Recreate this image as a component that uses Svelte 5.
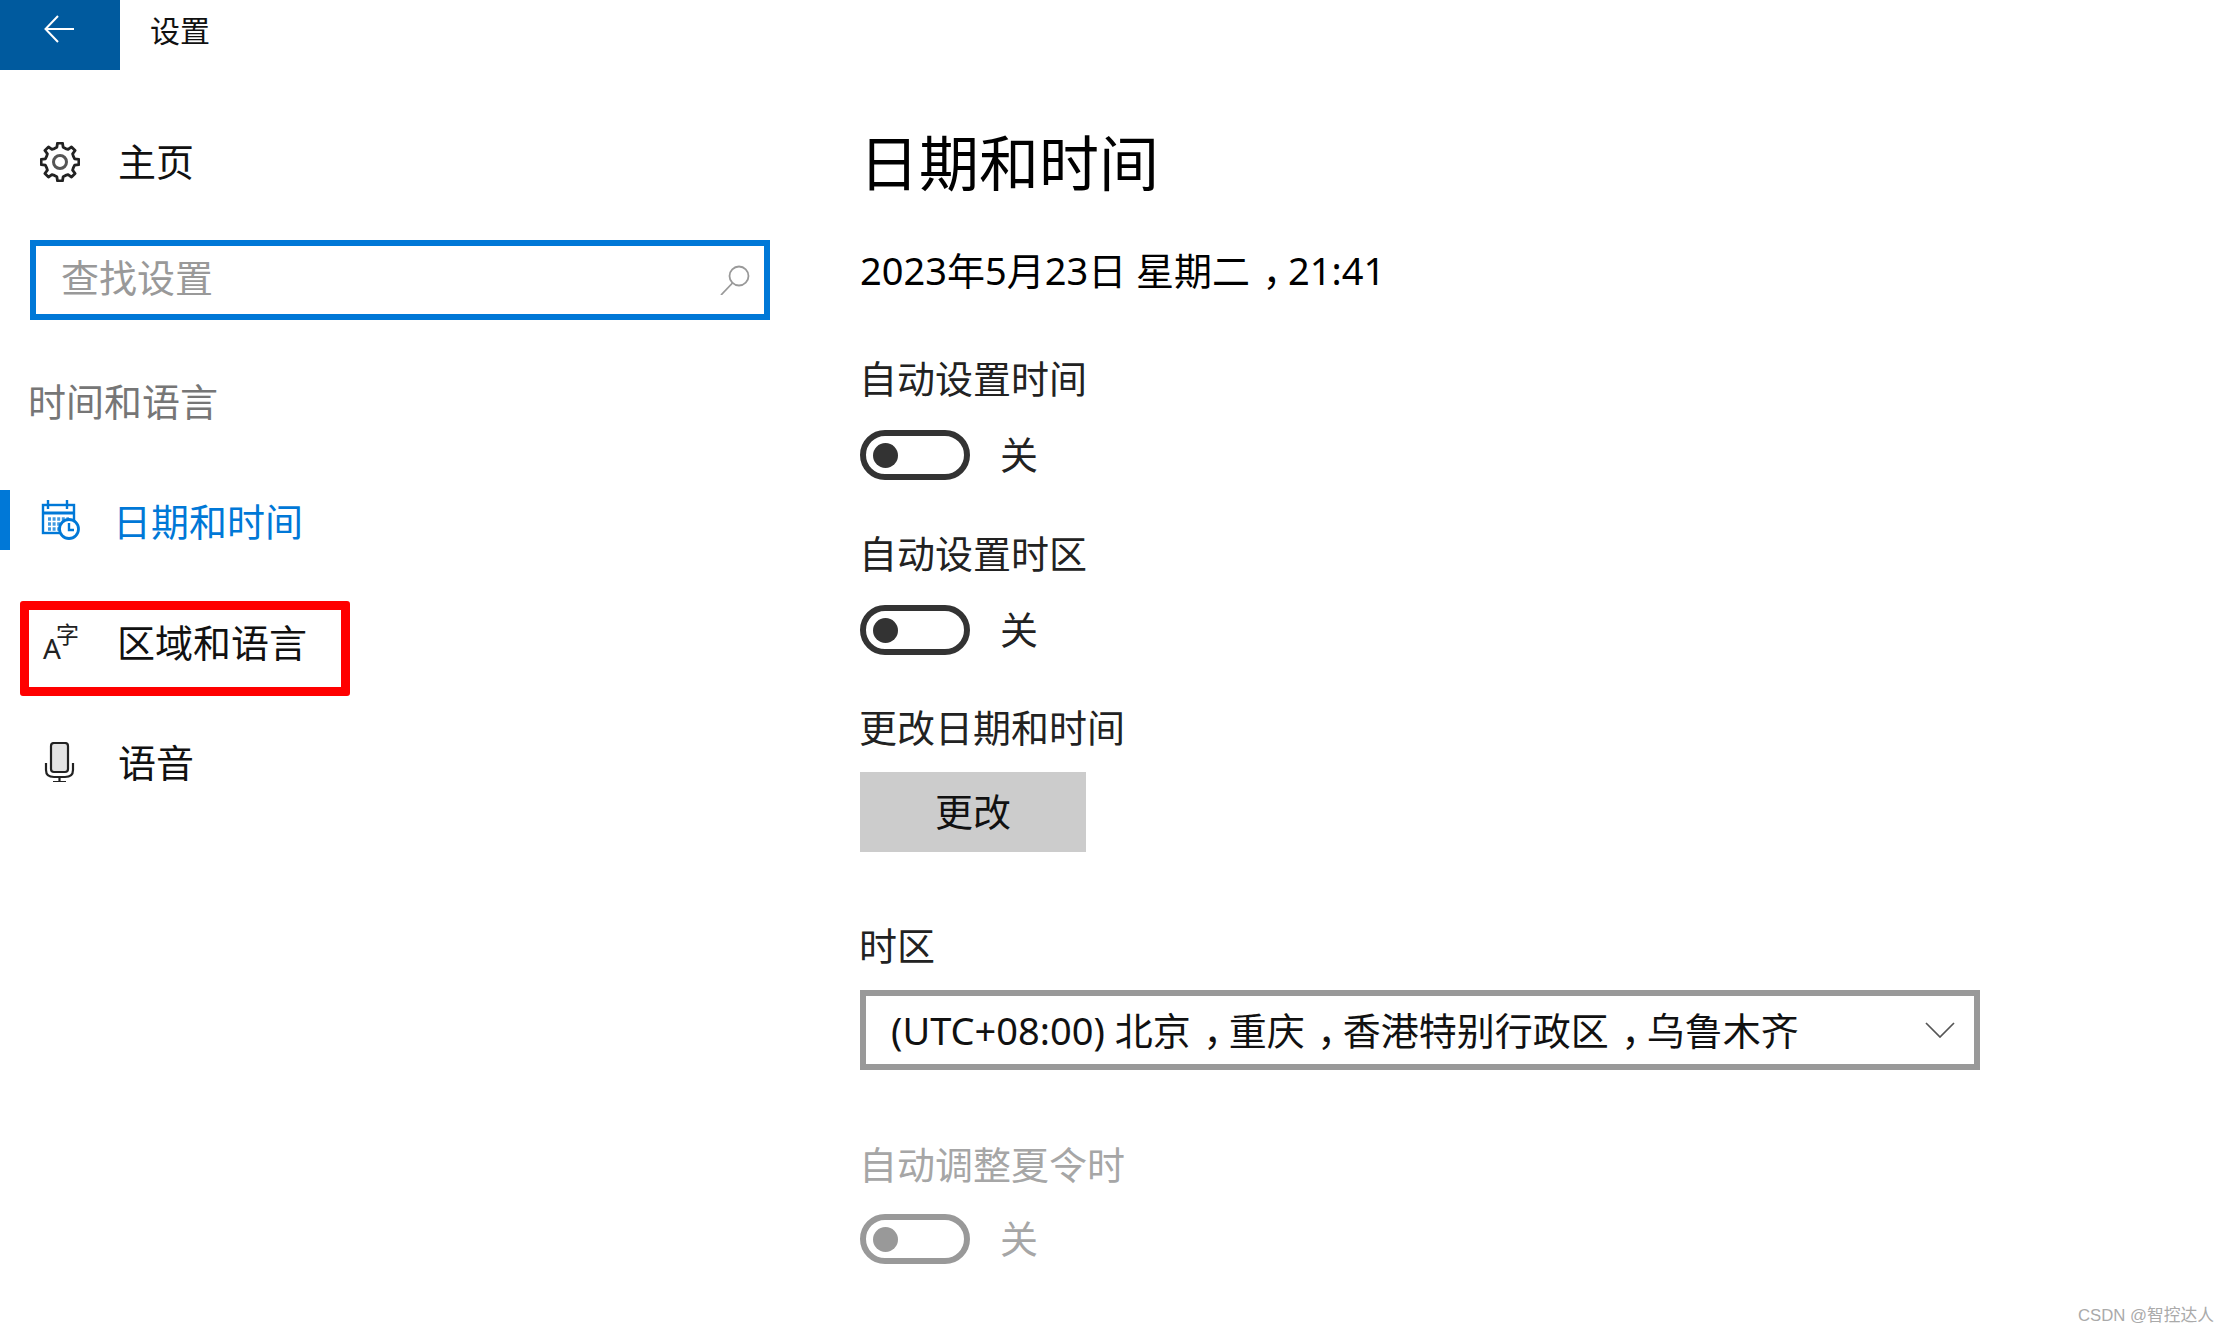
<script>
// 8 tooth cog outline, centred on 20,20
function gearPath() {
	let d = "";
	const teeth = 8;
	for (let i = 0; i < teeth; i++) {
		const a = (i * 2 * Math.PI) / teeth - Math.PI / 2;
		const step = (2 * Math.PI) / teeth;
		const pts = [
			[14.5, a - step * 0.5],
			[15, a - step * 0.27],
			[19, a - step * 0.17],
			[19, a + step * 0.17],
			[15, a + step * 0.27]
		];
		for (const [r, t] of pts) {
			const x = (20 + r * Math.cos(t)).toFixed(2);
			const y = (20 + r * Math.sin(t)).toFixed(2);
			d += (d ? "L" : "M") + x + " " + y;
		}
	}
	return d + "Z";
}

const gear = gearPath();

const toggles = [
	{ label: "自动设置时间" },
	{ label: "自动设置时区" }
];
</script>

<div class="page">
	<header class="titlebar">
		<div class="back">
			<svg width="30" height="28" viewBox="0 0 30 28" fill="none" stroke="#fff" stroke-width="2">
				<path d="M14 1 L1.5 14 L14 27 M1.5 14 H30" />
			</svg>
		</div>
		<span class="apptitle">设置</span>
	</header>

	<div class="body">
		<aside class="sidebar">
			<div class="nav home">
				<span class="icon">
					<svg width="40" height="40" viewBox="0 0 40 40" fill="none" stroke="#222" stroke-width="2.8" stroke-linejoin="round">
						<path d={gear} />
						<circle cx="20" cy="20" r="6.5" stroke="#555" stroke-width="3" />
					</svg>
				</span>
				<span class="hometext">主页</span>
			</div>

			<div class="search">
				<span class="placeholder">查找设置</span>
				<svg class="searchicon" width="30" height="30" viewBox="0 0 30 30" fill="none" stroke="#999" stroke-width="1.8">
					<circle cx="19" cy="11" r="9.5" />
					<path d="M12.5 18 L1 30" />
				</svg>
			</div>

			<div class="section">时间和语言</div>

			<nav class="navlist">
				<div class="nav active">
					<span class="icon">
						<svg width="40" height="40" viewBox="0 0 40 40" fill="none" stroke="#0078d7" stroke-width="2.4">
							<rect x="3" y="5" width="31" height="28" />
							<path d="M8 0 V9 M27 0 V9" />
							<path d="M3 13 H34" stroke-width="3" />
							<path d="M8 19 H29 M8 24 H22 M8 29 H20" stroke-width="3.4" stroke-dasharray="3 1.6" opacity="0.75" />
							<circle cx="29" cy="29" r="9.5" fill="#fff" stroke-width="2.8" />
							<path d="M29 23 V30 H34" stroke-width="2.4" />
						</svg>
					</span>
					<span class="navtext">日期和时间</span>
				</div>

				<div class="nav marked">
					<span class="icon">
						<svg class="langicon" width="40" height="40" viewBox="0 0 40 40">
							<text x="3" y="38" class="glyph-a">A</text>
							<text x="16" y="22" class="glyph-zi">字</text>
						</svg>
					</span>
					<span class="navtext">区域和语言</span>
					<div class="redbox"></div>
				</div>

				<div class="nav speech">
					<span class="icon">
						<svg width="40" height="40" viewBox="0 0 40 40" fill="none" stroke="#222" stroke-width="2.2">
							<rect x="11" y="1" width="17" height="29" rx="3" fill="#e4e4e4" />
							<path d="M6 21 V28 Q6 35 14 35 H25 Q33 35 33 28 V21" />
							<path d="M19.500 35 V40 M13 40 H26" />
						</svg>
					</span>
					<span class="navtext">语音</span>
				</div>
			</nav>
		</aside>

		<main class="content">
			<h1>日期和时间</h1>
			<p class="now">2023年5月23日 星期二<span class="punct">，</span>21:41</p>

			{#each toggles as t, i}
				<div class="label" class:first={i === 0}>{t.label}</div>
				<div class="toggle-row">
					<span class="toggle"><span class="knob"></span></span>
					<span class="state">关</span>
				</div>
			{/each}

			<div class="label change-label">更改日期和时间</div>
			<button class="change">更改</button>

			<div class="label tz">时区</div>
			<div class="select">
				<span>(UTC+08:00) 北京<span class="punct">，</span>重庆<span class="punct">，</span>香港特别行政区<span class="punct">，</span>乌鲁木齐</span>
				<svg width="30" height="16" viewBox="0 0 30 16" fill="none" stroke="#555" stroke-width="1.7">
					<path d="M1 1 L15 15 L29 1" />
				</svg>
			</div>

			<div class="label dst muted">自动调整夏令时</div>
			<div class="toggle-row muted last">
				<span class="toggle"><span class="knob"></span></span>
				<span class="state">关</span>
			</div>
		</main>
	</div>

	<div class="watermark">CSDN @智控达人</div>
</div>

<style>
:global(body) {
	background: #fff;
}

.page {
	position: relative;
	width: 2230px;
	height: 1334px;
	overflow: hidden;
	font-family: "Noto Sans", "Noto Sans CJK SC", sans-serif;
	font-size: 38px;
	line-height: 50px;
	color: #111;
}

.titlebar {
	display: flex;
	align-items: center;
	height: 70px;
}

.back {
	display: flex;
	align-items: center;
	justify-content: center;
	width: 120px;
	height: 70px;
	padding: 0 3px 12px 0;
	box-sizing: border-box;
	background: #005a9e;
}

.apptitle {
	margin: -8px 0 0 30px;
	font-size: 30px;
}

.body {
	display: flex;
}

.sidebar {
	flex: none;
	width: 860px;
}

.nav {
	position: relative;
	display: flex;
	align-items: center;
	height: 60px;
	gap: 37px;
	padding-left: 40px;
}

.nav .icon {
	display: flex;
	width: 40px;
	height: 40px;
}

.navtext {
	margin-top: 2px;
}

.home {
	margin-top: 62px;
	gap: 38px;
}

.hometext {
	margin-top: -2px;
}

.active {
	gap: 33px;
	color: #0078d7;
}

.speech {
	gap: 38px;
}

.speech .navtext {
	margin-top: 0;
}

.search {
	display: flex;
	align-items: center;
	justify-content: space-between;
	box-sizing: border-box;
	width: 740px;
	height: 80px;
	margin: 48px 0 0 30px;
	padding: 0 14px 0 25px;
	border: 6px solid #0078d7;
}

.placeholder {
	color: #999;
	margin-top: -6px;
}

.section {
	margin: 56px 0 0 28px;
	color: #767676;
}

.navlist {
	display: flex;
	flex-direction: column;
	gap: 61px;
	margin-top: 64px;
}

.active::before {
	content: "";
	position: absolute;
	left: 0;
	top: 0;
	width: 10px;
	height: 60px;
	background: #0078d7;
}

.langicon {
	overflow: visible;
}

.glyph-a {
	font-size: 28px;
	fill: #222;
}

.glyph-zi {
	font-size: 23px;
	fill: #222;
}

.redbox {
	position: absolute;
	left: 20px;
	top: -10px;
	width: 330px;
	height: 95px;
	box-sizing: border-box;
	border: 9px solid #f00;
	border-radius: 3px;
}

.content {
	flex: none;
	width: 1120px;
	padding-top: 53px;
}

h1 {
	margin: 0 0 0 -1px;
	font-size: 60px;
	font-weight: 400;
	line-height: 80px;
	color: #000;
}

.now {
	height: 50px;
	margin: 42px 0 0;
	color: #000;
}

/* the comma sits in the middle of its em box here, half width glyph plus margins */
.punct {
	font-feature-settings: "halt";
	margin: 0 0.17em 0 0.33em;
}

.label {
	margin: 48px 0 0 -1px;
	color: #222;
}

.label.first {
	margin-top: 58px;
}

.toggle-row {
	display: flex;
	align-items: center;
	gap: 30px;
	height: 50px;
	margin-top: 27px;
	color: #222;
}

.toggle-row.last {
	margin-top: 25px;
}

.state {
	margin-top: -2px;
}

.toggle {
	display: flex;
	align-items: center;
	box-sizing: border-box;
	width: 110px;
	height: 50px;
	padding-left: 7px;
	border: 6px solid #333;
	border-radius: 25px;
}

.knob {
	width: 25px;
	height: 25px;
	border-radius: 50%;
	background: #333;
}

.label.change-label {
	margin-top: 47px;
}

.change {
	display: block;
	width: 226px;
	height: 80px;
	margin-top: 20px;
	padding: 0 0 3px;
	border: 0;
	background: #ccc;
	color: #111;
	font: inherit;
}

.label.tz {
	margin-top: 68px;
}

.select {
	display: flex;
	align-items: center;
	justify-content: space-between;
	box-sizing: border-box;
	height: 80px;
	margin-top: 20px;
	padding: 0 19px 0 25px;
	border: 6px solid #999;
	white-space: nowrap;
}

.label.dst {
	margin-top: 69px;
}

.muted {
	color: #a6a6a6;
}

.muted .toggle {
	border-color: #999;
}

.muted .knob {
	background: #999;
}

.watermark {
	position: absolute;
	right: 16px;
	bottom: 7px;
	font-size: 16.75px;
	line-height: 22px;
	color: #aaa;
	font-family: "Liberation Sans", "Noto Sans CJK SC", sans-serif;
}
</style>
